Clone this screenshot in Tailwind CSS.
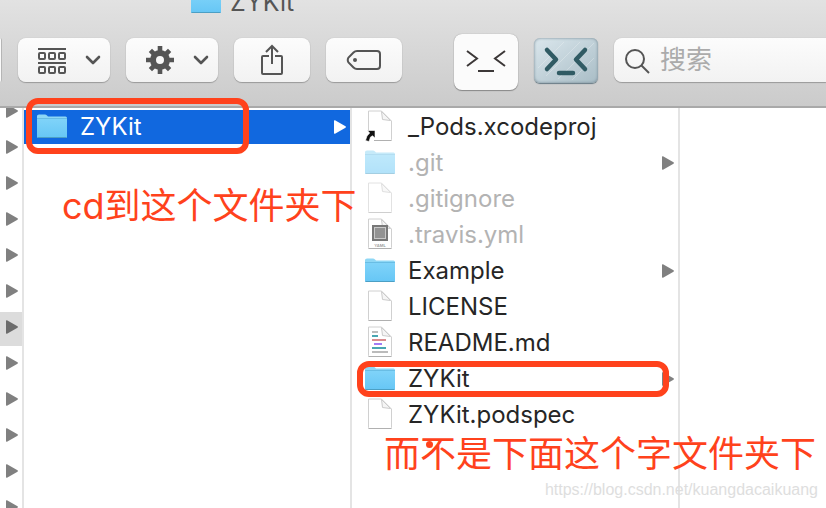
<!DOCTYPE html>
<html lang="zh-CN">
<head>
    <meta charset="UTF-8">
    <meta name="viewport" content="width=device-width, initial-scale=1.0">
    <title>ZYKit</title>
    <script src="https://cdn.jsdelivr.net/npm/@tailwindcss/browser@4"></script>
</head>
<body class="relative flex h-screen flex-col overflow-hidden bg-white font-['Inter','Noto_Sans_CJK_SC',sans-serif] text-[#262626]">

    <!-- Shared icons -->
    <svg class="absolute size-0" aria-hidden="true">
        <defs>
            <linearGradient id="folder-fill" x1="0" y1="0" x2="0" y2="1">
                <stop offset="0" stop-color="#7fd3f9"/>
                <stop offset="1" stop-color="#66c6f5"/>
            </linearGradient>
        </defs>
        <symbol id="folder" viewBox="0 0 32 28">
            <path d="M1 3Q1 1.500 3 1.500H9Q10 1.500 11 2.500L12 3.500H29.500Q31 3.500 31 5V24H1Z" fill="#8ed7f5"/>
            <path d="M1 6H31V24Q31 25 30 25H2Q1 25 1 24Z" fill="url(#folder-fill)"/>
            <path d="M1 5.500H31" stroke="#69bde4" stroke-width="1"/>
            <path d="M1.500 24.500H30.500" stroke="#4c9fc4" stroke-width="1"/>
        </symbol>
        <symbol id="page" viewBox="0 0 32 34">
            <path d="M4.500 1H17.500L27.500 11V29.500Q27.500 30.500 26.500 30.500H5.500Q4.500 30.500 4.500 29.500Z" fill="#fff" stroke="#d0d0d0"/>
            <path d="M4.500 30.500H27.500" stroke="#b0b0b0"/>
            <path d="M17.500 1.500L18.500 9.500L26.500 10.500Z" fill="#f5f5f5" stroke="#cbcbcb"/>
        </symbol>
        <symbol id="arrow" viewBox="0 0 12 14">
            <path d="M0 1Q0 0 1 .3L11.500 6.300Q12.300 7 11.500 7.700L1 13.700Q0 14 0 13Z" fill="currentColor"/>
        </symbol>
        <symbol id="chevron" viewBox="0 0 16 10">
            <path d="M2 2L8 8L14 2" fill="none" stroke="#555" stroke-width="2.600" stroke-linecap="round" stroke-linejoin="round"/>
        </symbol>
    </svg>

    <!-- Title and toolbar -->
    <header class="flex h-[108px] shrink-0 flex-col overflow-hidden border-b-2 border-[#a9a9a9] bg-linear-to-b from-[#e2e2e2] to-[#cbcbcb]">
        <div class="-mt-3.5 flex h-8 shrink-0 items-center gap-2 pl-[190px]">
            <svg class="h-7 w-8"><use href="#folder"/></svg>
            <h1 class="text-[25px] leading-8 text-[#555]">ZYKit</h1>
        </div>
        <div class="mt-3 flex h-[60px] items-center gap-4">
            <button aria-label="视图" class="h-11 w-0.5 rounded-r border-r border-[#b5b5b5] bg-[#fafafa]"></button>
            <button aria-label="分组" class="flex h-11 w-[92px] items-center justify-between rounded-lg bg-linear-to-b from-[#fcfcfc] to-[#f2f2f2] pr-[9px] pl-5 shadow-[0_1px_1px_#999,0_0_1px_#aaa]">
                <svg class="h-7 w-7" viewBox="0 0 28 28" fill="none" stroke="#555" stroke-width="2">
                    <path d="M0 3H28M0 17H28"/>
                    <rect x="1" y="7" width="6" height="6" rx="1"/><rect x="11" y="7" width="6" height="6" rx="1"/><rect x="21" y="7" width="6" height="6" rx="1"/>
                    <rect x="1" y="21" width="6" height="6" rx="1"/><rect x="11" y="21" width="6" height="6" rx="1"/><rect x="21" y="21" width="6" height="6" rx="1"/>
                </svg>
                <svg class="h-2.5 w-4"><use href="#chevron"/></svg>
            </button>
            <button aria-label="操作" class="flex h-11 w-[92px] items-center justify-between rounded-lg bg-linear-to-b from-[#fcfcfc] to-[#f2f2f2] pr-[9px] pl-5 shadow-[0_1px_1px_#999,0_0_1px_#aaa]">
                <svg class="h-7 w-7" viewBox="-14 -14 28 28">
                    <circle r="7" fill="none" stroke="#555" stroke-width="6"/>
                    <g stroke="#555" stroke-width="4.600">
                        <path d="M0 -14V-8M0 14V8M-14 0H-8M14 0H8"/>
                        <path d="M-9.600 -9.600L-6 -6M9.600 9.600L6 6M-9.600 9.600L-6 6M9.600 -9.600L6 -6"/>
                    </g>
                </svg>
                <svg class="h-2.5 w-4"><use href="#chevron"/></svg>
            </button>
            <button aria-label="共享" class="flex h-11 w-[76px] items-center justify-center rounded-lg bg-linear-to-b from-[#fcfcfc] to-[#f2f2f2] shadow-[0_1px_1px_#999,0_0_1px_#aaa]">
                <svg class="h-8 w-6" viewBox="0 0 24 32" fill="none" stroke="#555" stroke-width="2">
                    <path d="M9 12H3Q2 12 2 13V29Q2 30 3 30H21Q22 30 22 29V13Q22 12 21 12H15M12 20V2M6 8L12 2L18 8"/>
                </svg>
            </button>
            <button aria-label="标签" class="flex h-11 w-[76px] items-center justify-center rounded-lg bg-linear-to-b from-[#fcfcfc] to-[#f2f2f2] shadow-[0_1px_1px_#999,0_0_1px_#aaa]">
                <svg class="h-[22px] w-9" viewBox="0 0 36 22" fill="none" stroke="#555" stroke-width="2">
                    <path d="M11 2H31Q34 2 34 5V17Q34 20 31 20H11Q9 20 7.500 18.500L2.500 13.500Q1 11 2.500 8.500L7.500 3.500Q9 2 11 2Z"/>
                    <circle cx="9" cy="11" r="2" fill="#555" stroke="none"/>
                </svg>
            </button>
            <button aria-label="终端" class="ml-9 h-14 w-16 self-end rounded-lg bg-[#fbfbfb] shadow-[0_1px_1px_#888,0_0_1px_#888]">
                <svg class="h-14 w-16" viewBox="0 0 64 56" fill="none" stroke="#3c3838" stroke-width="2">
                    <path d="M13 17L23 24.500L13 32M51 17L41 24.500L51 32M24 37H40"/>
                </svg>
            </button>
            <button aria-label="在终端打开" class="h-[45px] w-16 rounded-md bg-linear-to-br from-[#dbe7ed] to-[#a9bdc6] shadow-[inset_0_0_3px_#718590,0_1px_1px_#687b85]">
                <svg class="h-[45px] w-16" viewBox="0 0 64 45" fill="none">
                    <path d="M4 30L30 4M12 38L46 4M24 41L60 5M38 42L60 20" stroke="#fff" stroke-opacity=".25"/>
                    <path d="M13 12L22 21.500L13 31M51 12L42 21.500L51 31M25 35H39" stroke="#305b64" stroke-width="4.500" stroke-linecap="round" stroke-linejoin="round"/>
                </svg>
            </button>
            <label class="flex h-11 min-w-0 flex-1 items-center gap-2 rounded-l-lg bg-linear-to-b from-[#fcfcfc] to-[#f2f2f2] pl-2.5 shadow-[0_1px_1px_#999,0_0_1px_#aaa]">
                <svg class="h-7 w-7 shrink-0" viewBox="0 0 28 28" fill="none" stroke="#555" stroke-width="2">
                    <circle cx="11" cy="13" r="9"/>
                    <path d="M17.500 19.500L25 27"/>
                </svg>
                <input type="search" aria-label="搜索" placeholder="搜索" class="w-full min-w-0 bg-transparent text-[26px] leading-9 outline-none placeholder:text-[#ababab]">
            </label>
        </div>
    </header>

    <!-- Finder columns -->
    <main class="flex min-h-0 flex-1 text-2xl leading-9">
        <div class="w-6 shrink-0 overflow-hidden border-r-2 border-[#e4e4e4] text-[#808080]">
            <ul class="-mt-3 flex flex-col gap-0.5">
                <li class="flex h-[34px] items-start pt-2 pl-1.5"><svg class="h-3.5 w-3"><use href="#arrow"/></svg></li>
                <li class="flex h-[34px] items-start pt-2 pl-1.5"><svg class="h-3.5 w-3"><use href="#arrow"/></svg></li>
                <li class="flex h-[34px] items-start pt-2 pl-1.5"><svg class="h-3.5 w-3"><use href="#arrow"/></svg></li>
                <li class="flex h-[34px] items-start pt-2 pl-1.5"><svg class="h-3.5 w-3"><use href="#arrow"/></svg></li>
                <li class="flex h-[34px] items-start pt-2 pl-1.5"><svg class="h-3.5 w-3"><use href="#arrow"/></svg></li>
                <li class="flex h-[34px] items-start pt-2 pl-1.5"><svg class="h-3.5 w-3"><use href="#arrow"/></svg></li>
                <li class="flex h-[34px] items-start bg-[#dcdcdc] pt-2 pl-1.5 text-[#6c6c6c]"><svg class="h-3.5 w-3"><use href="#arrow"/></svg></li>
                <li class="flex h-[34px] items-start pt-2 pl-1.5"><svg class="h-3.5 w-3"><use href="#arrow"/></svg></li>
                <li class="flex h-[34px] items-start pt-2 pl-1.5"><svg class="h-3.5 w-3"><use href="#arrow"/></svg></li>
                <li class="flex h-[34px] items-start pt-2 pl-1.5"><svg class="h-3.5 w-3"><use href="#arrow"/></svg></li>
                <li class="flex h-[34px] items-start pt-2 pl-1.5"><svg class="h-3.5 w-3"><use href="#arrow"/></svg></li>
                <li class="flex h-[34px] items-start pt-2 pl-1.5"><svg class="h-3.5 w-3"><use href="#arrow"/></svg></li>
            </ul>
        </div>

        <ul class="w-[328px] shrink-0 border-r-2 border-[#e4e4e4] pt-0.5">
            <li class="flex h-[34px] items-center gap-3 bg-[#1168df] pr-1 pl-3 text-white">
                <svg class="h-7 w-8"><use href="#folder"/></svg>
                <span class="flex-1">ZYKit</span>
                <svg class="h-3.5 w-3"><use href="#arrow"/></svg>
            </li>
        </ul>

        <ul class="flex w-[328px] shrink-0 flex-col gap-0.5 border-r-2 border-[#e4e4e4] pt-0.5">
            <li class="flex h-[34px] items-center gap-3 pr-1 pl-3">
                <svg class="h-[34px] w-8" viewBox="0 0 32 34">
                    <use href="#page"/>
                    <path d="M1 20H10V31H1Z" fill="#fff"/>
                    <path d="M3.500 20.500H11V28L8.500 25.800L6.500 27L5 31.500L1.500 30.500L3 26L5.700 23Z" fill="#111" stroke="#fff" stroke-width=".6"/>
                </svg>
                <span>_Pods.xcodeproj</span>
            </li>
            <li class="flex h-[34px] items-center gap-3 pr-1 pl-3">
                <svg class="h-7 w-8 opacity-50"><use href="#folder"/></svg>
                <span class="flex-1 text-[#b3b3b3]">.git</span>
                <svg class="h-3.5 w-3 text-[#808080]"><use href="#arrow"/></svg>
            </li>
            <li class="flex h-[34px] items-center gap-3 pr-1 pl-3">
                <svg class="h-[34px] w-8 opacity-60"><use href="#page"/></svg>
                <span class="text-[#b3b3b3]">.gitignore</span>
            </li>
            <li class="flex h-[34px] items-center gap-3 pr-1 pl-3">
                <svg class="h-[34px] w-8" viewBox="0 0 32 34">
                    <use href="#page"/>
                    <rect x="9" y="8" width="14" height="14" fill="#c8c8c8" stroke="#777" stroke-width="2"/>
                    <rect x="11" y="10" width="10" height="10" fill="#929292"/>
                    <text x="16" y="29" text-anchor="middle" font-size="4" font-weight="600" fill="#999">YAML</text>
                </svg>
                <span class="text-[#b3b3b3]">.travis.yml</span>
            </li>
            <li class="flex h-[34px] items-center gap-3 pr-1 pl-3">
                <svg class="h-7 w-8"><use href="#folder"/></svg>
                <span class="flex-1">Example</span>
                <svg class="h-3.5 w-3 text-[#808080]"><use href="#arrow"/></svg>
            </li>
            <li class="flex h-[34px] items-center gap-3 pr-1 pl-3">
                <svg class="h-[34px] w-8"><use href="#page"/></svg>
                <span>LICENSE</span>
            </li>
            <li class="flex h-[34px] items-center gap-3 pr-1 pl-3">
                <svg class="h-[34px] w-8" viewBox="0 0 32 34" fill="none" stroke-width="2">
                    <use href="#page" stroke-width="1"/>
                    <path d="M8 6H14M8 26H24" stroke="#bbb"/>
                    <path d="M8 10H14M8 22H22" stroke="#4aa6b2"/>
                    <path d="M8 14H22" stroke="#d98c8f"/>
                    <path d="M10 18H18" stroke="#a27cf5"/>
                </svg>
                <span>README.md</span>
            </li>
            <li class="flex h-[34px] items-center gap-3 pr-1 pl-3">
                <svg class="h-7 w-8"><use href="#folder"/></svg>
                <span class="flex-1">ZYKit</span>
                <svg class="h-3.5 w-3 text-[#808080]"><use href="#arrow"/></svg>
            </li>
            <li class="flex h-[34px] items-center gap-3 pr-1 pl-3">
                <svg class="h-[34px] w-8"><use href="#page"/></svg>
                <span>ZYKit.podspec</span>
            </li>
        </ul>
    </main>

    <!-- Hand-drawn notes over the window -->
    <div class="absolute top-[98px] left-[26px] h-14 w-[223px] rounded-xl border-6 border-[#ff421c]"></div>
    <p class="absolute top-[186px] left-[62px] text-4xl leading-10 whitespace-nowrap text-[#ff421c]">cd到这个文件夹下</p>
    <div class="absolute top-[361px] left-[357px] h-9 w-[312px] rounded-xl border-6 border-[#ff421c]"></div>
    <p class="absolute top-[434px] left-[384px] text-4xl leading-10 whitespace-nowrap text-[#ff421c]">而不是下面这个字文件夹下</p>
    <span class="absolute top-[441px] left-[426px] size-[7px] rounded-full bg-[#ff421c]"></span>
    <p class="absolute right-2 bottom-1.5 font-['Liberation_Sans',sans-serif] text-base text-[#dedede]">https://blog.csdn.net/kuangdacaikuang</p>

</body>
</html>
